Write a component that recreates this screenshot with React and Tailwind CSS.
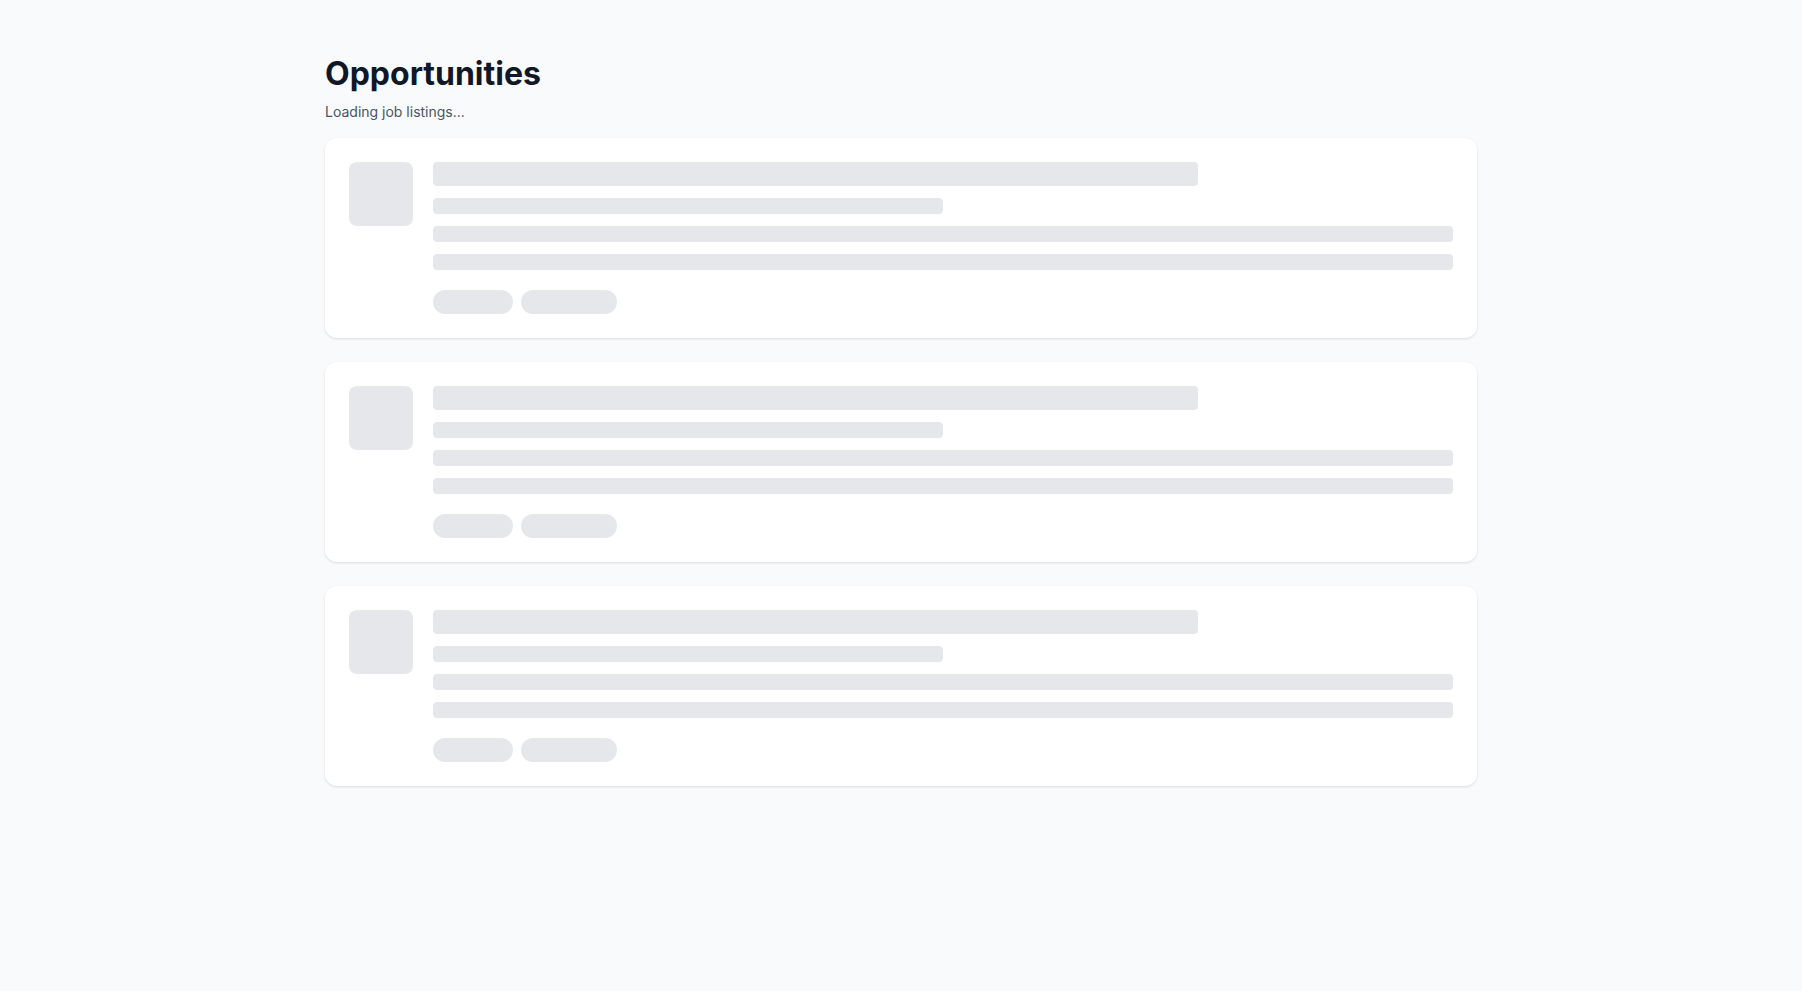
import React from 'react';

// One placeholder card while job listings load
const SkeletonCard = () => {
  return (
    <div className="bg-white rounded-xl shadow-sm p-6">
      <div className="flex gap-5">
        <div className="w-16 h-16 rounded-lg bg-gray-200 shrink-0"></div>
        <div className="flex-1">
          <div className="h-6 w-3/4 rounded bg-gray-200"></div>
          <div className="h-4 w-1/2 rounded bg-gray-200 mt-3"></div>
          <div className="h-4 w-full rounded bg-gray-200 mt-3"></div>
          <div className="h-4 w-full rounded bg-gray-200 mt-3"></div>
          <div className="flex gap-2 mt-5">
            <div className="h-6 w-20 rounded-full bg-gray-200"></div>
            <div className="h-6 w-24 rounded-full bg-gray-200"></div>
          </div>
        </div>
      </div>
    </div>
  );
};

const App = () => {
  return (
    <div className="min-h-screen bg-gray-50 font-['Inter',sans-serif]">
      <div className="max-w-6xl mx-auto pt-[50px] pb-12">
        <h1 className="text-[32px] leading-[48px] font-bold text-gray-900">Opportunities</h1>
        <p className="text-sm text-gray-600 mt-1">Loading job listings...</p>
        <div className="mt-4 space-y-6">
          {[0, 1, 2].map((i) => (
            <SkeletonCard key={i} />
          ))}
        </div>
      </div>
    </div>
  );
};

export default App;
